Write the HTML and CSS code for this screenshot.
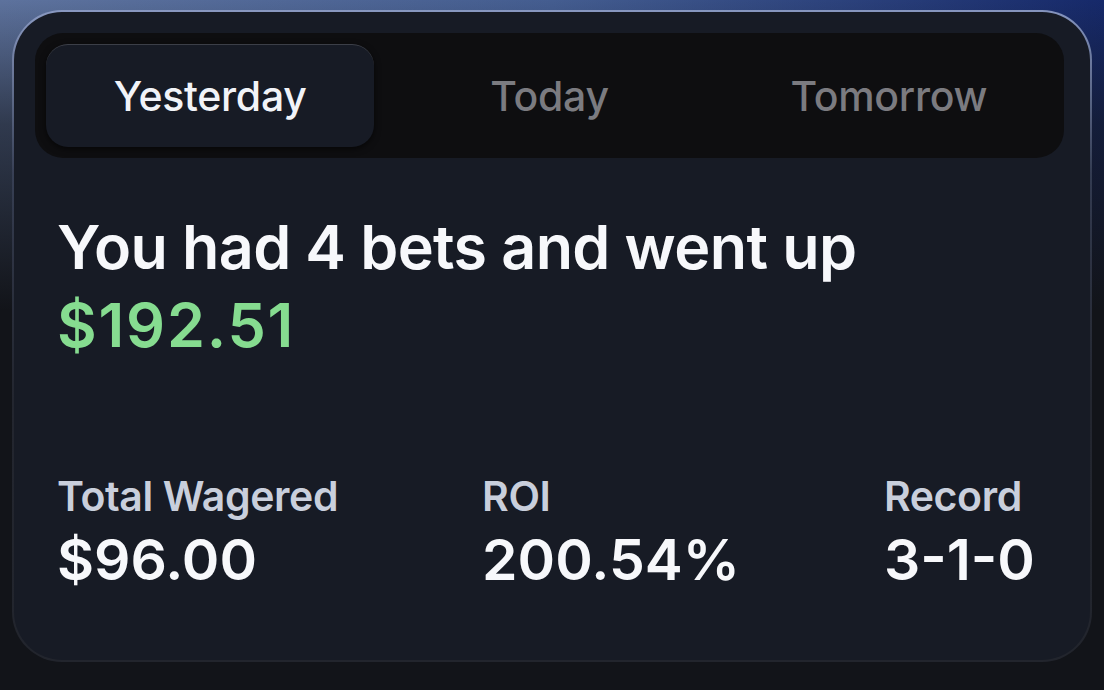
FILE: index.html
```html
<!DOCTYPE html>
<html>
<head>
<meta charset="utf-8">
<link rel="stylesheet" href="styles.css">
</head>
<body>
<div class="card">
  <div class="tabs">
    <div class="tab active">Yesterday</div>
    <div class="tab">Today</div>
    <div class="tab">Tomorrow</div>
  </div>
  <div class="summary">
    <div class="headline">You had 4 bets and went up</div>
    <div class="amount">$192.51</div>
  </div>
  <div class="stats">
    <div class="stat">
      <div class="label">Total Wagered</div>
      <div class="value">$96.00</div>
    </div>
    <div class="stat">
      <div class="label">ROI</div>
      <div class="value">200.54%</div>
    </div>
    <div class="stat">
      <div class="label">Record</div>
      <div class="value">3-1-0</div>
    </div>
  </div>
</div>
</body>
</html>
```

FILE: styles.css
```css
html, body {
  margin: 0;
  padding: 0;
  width: 1104px;
  height: 690px;
  overflow: hidden;
}
body {
  font-family: Inter, "Noto Sans", sans-serif;
  background:
    linear-gradient(180deg, rgba(18,20,25,0) 0%, rgba(18,20,25,0.6) 18%, #121419 45%),
    linear-gradient(90deg, #5d729d 0%, #445d90 50%, #16296a 100%);
  padding: 10px 12px 0 12px;
  box-sizing: border-box;
}
.card {
  width: 1080px;
  height: 652px;
  box-sizing: border-box;
  border: 2px solid transparent;
  border-radius: 50px;
  background:
    linear-gradient(#171b25, #171b25) padding-box,
    linear-gradient(180deg, rgba(140,155,195,0.95) 0%, rgba(60,68,90,0.8) 25%, #23262f 60%, #22252d 100%) border-box;
  padding: 21px 26px 0 21px;
  display: flex;
  flex-direction: column;
}
.tabs {
  background: #0e0e10;
  border-radius: 28px;
  padding: 11px;
  display: grid;
  grid-template-columns: 1fr 1fr 1fr;
  gap: 11px;
  height: 125px;
  box-sizing: border-box;
}
.tab {
  display: flex;
  align-items: center;
  justify-content: center;
  font-size: 41px;
  font-weight: 500;
  color: #7b7b80;
  border-radius: 22px;
  letter-spacing: -0.3px;
}
.tab.active {
  background: #171b25;
  color: #f1f3f8;
  border-top: 1.5px solid rgba(255,255,255,0.16);
  box-shadow: 0 2px 6px rgba(0,0,0,0.6);
}
.summary {
  padding: 50px 0 0 22px;
}
.headline {
  font-size: 61px;
  font-weight: 600;
  color: #f7f8fb;
  line-height: 78px;
  letter-spacing: -0.6px;
}
.amount {
  font-size: 61px;
  font-weight: 600;
  color: #86dc90;
  line-height: 78px;
  letter-spacing: 1.8px;
}
.stats {
  display: flex;
  justify-content: space-between;
  padding: 107px 29px 0 22px;
}
.label {
  font-size: 41px;
  font-weight: 600;
  color: #c9cfdc;
  line-height: 50px;
  letter-spacing: -0.4px;
}
.value {
  font-size: 57px;
  font-weight: 600;
  color: #f7f8fb;
  line-height: 66px;
  margin-top: 6px;
  letter-spacing: 0px;
}
```
